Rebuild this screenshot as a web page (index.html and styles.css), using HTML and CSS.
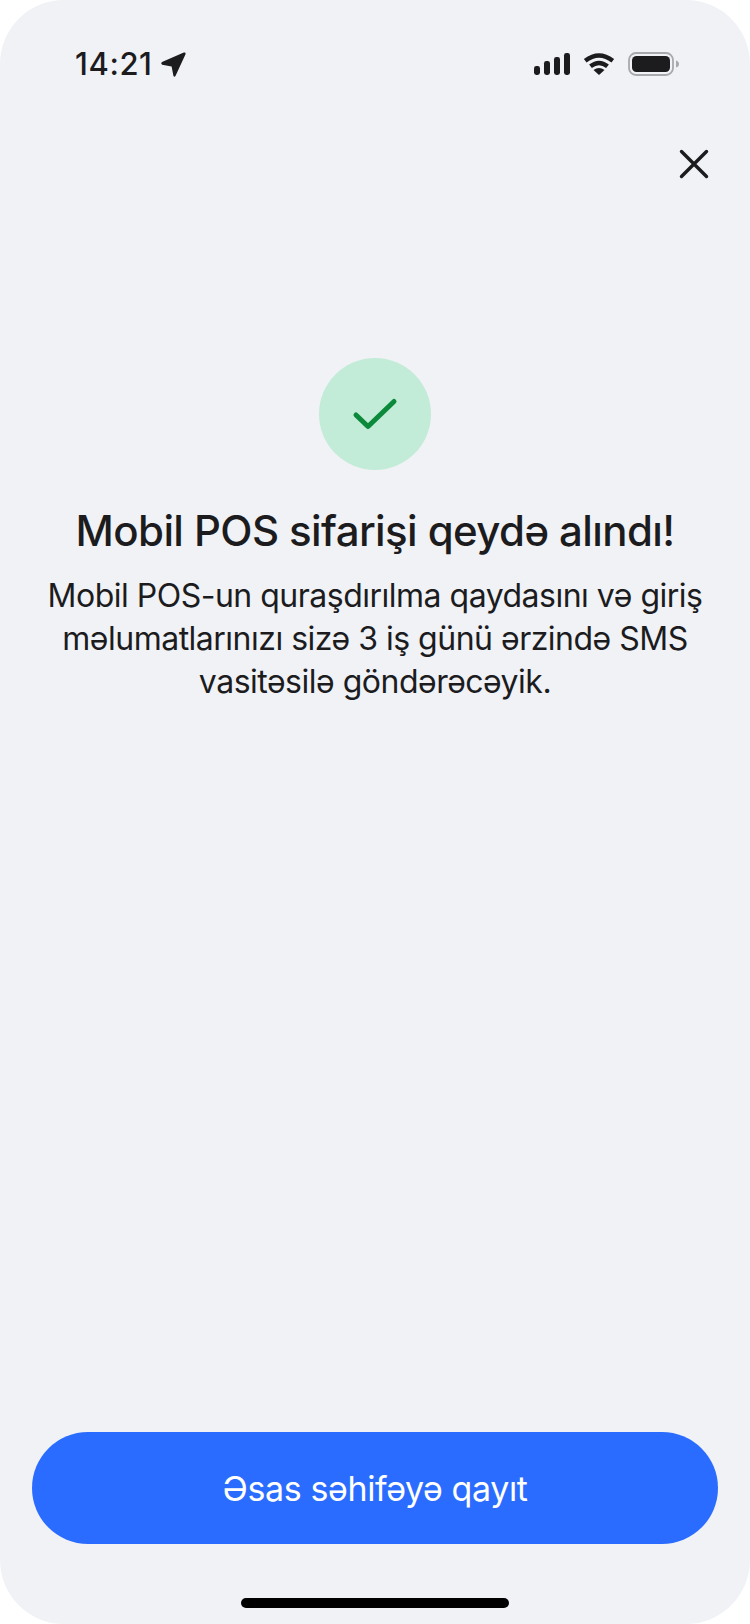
FILE: index.html
```html
<!DOCTYPE html>
<html lang="en">
<head>
<meta charset="UTF-8">
<meta name="viewport" content="width=device-width, initial-scale=1.0">
<title>Mobil POS</title>
<link rel="stylesheet" href="styles.css">
</head>
<body>

<div class="screen">
  <div class="status-bar">
    <div class="status-left">
      <span class="time">14:21</span>
      <svg class="location" width="25" height="25" viewBox="0 0 25 25"><path d="M1 10 L22.800 0.600 Q25.200 0 24.400 2.400 L14.600 23.800 Q13.400 25.600 12.400 23.800 L10.600 14.400 L1.200 12.800 Q-0.600 11.400 1 10 Z" fill="#1c1c1e"/></svg>
    </div>
    <div class="status-right">
      <svg width="36" height="22" viewBox="0 0 36 22"><rect x="0" y="13" width="6" height="9" rx="2.400" fill="#1c1c1e"/><rect x="10" y="8" width="6" height="14" rx="2.400" fill="#1c1c1e"/><rect x="20" y="4" width="6" height="18" rx="2.400" fill="#1c1c1e"/><rect x="30" y="0" width="6" height="22" rx="2.400" fill="#1c1c1e"/></svg>
      <svg width="32" height="22" viewBox="0 0 32 22"><path d="M2.200 7.800 Q16 -2.600 29.800 7.800" fill="none" stroke="#1c1c1e" stroke-width="4.400"/><path d="M7.500 13.200 Q16 6.600 24.500 13.200" fill="none" stroke="#1c1c1e" stroke-width="4.400"/><path d="M10.500 17 Q16 13.200 21.500 17 L16 22 Z" fill="#1c1c1e"/></svg>
      <svg width="51" height="24" viewBox="0 0 51 24"><rect x="1" y="1" width="44" height="22" rx="7" fill="none" stroke="#a9a9ad" stroke-width="1.800"/><rect x="4" y="4" width="38" height="16" rx="4.500" fill="#1c1c1e"/><path d="M48 8.500 Q51 9.500 51 12 Q51 14.500 48 15.500 Z" fill="#a9a9ad"/></svg>
    </div>
  </div>

  <div class="close-row">
    <svg width="30" height="30" viewBox="0 0 30 30"><path d="M2.500 2.500 L27.500 27.500 M27.500 2.500 L2.500 27.500" stroke="#1c1c1e" stroke-width="3.400" stroke-linecap="round"/></svg>
  </div>

  <div class="content">
    <div class="check-circle">
      <svg width="46" height="34" viewBox="0 0 46 34"><path d="M4 18 L16 29.500 L42 4.500" fill="none" stroke="#0a8a3a" stroke-width="5" stroke-linecap="round" stroke-linejoin="round"/></svg>
    </div>
    <h1 class="title">Mobil POS sifarişi qeydə alındı!</h1>
    <p class="desc">Mobil POS-un quraşdırılma qaydasını və giriş<br>məlumatlarınızı sizə 3 iş günü ərzində SMS<br>vasitəsilə göndərəcəyik.</p>
  </div>

  <div class="footer">
    <button class="main-btn">Əsas səhifəyə qayıt</button>
    <div class="home-bar"></div>
  </div>
</div>

</body>
</html>
```

FILE: styles.css
```css
* {
  box-sizing: border-box;
}
body {
  margin: 0;
  background-color: #fff;
  font-family: 'Inter', sans-serif;
  color: #1c1c1e;
}
.screen {
  width: 750px;
  height: 1624px;
  background-color: #f0f2f6;
  border-radius: 64px;
  display: flex;
  flex-direction: column;
  overflow: hidden;
}
.status-bar {
  display: flex;
  justify-content: space-between;
  align-items: center;
  height: 36px;
  margin-top: 46px;
  padding: 0 71px 0 75px;
}
.status-left {
  display: flex;
  align-items: center;
  gap: 8px;
}
.time {
  font-size: 31px;
  font-weight: 500;
  line-height: 36px;
  letter-spacing: 0.6px;
}
.status-right {
  display: flex;
  align-items: center;
  gap: 13px;
}
.close-row {
  display: flex;
  justify-content: flex-end;
  margin-top: 67px;
  padding-right: 41px;
}
.content {
  flex: 1;
  display: flex;
  flex-direction: column;
  align-items: center;
  padding-top: 179px;
  text-align: center;
}
.check-circle {
  width: 112px;
  height: 112px;
  border-radius: 50%;
  background-color: #c3ecd8;
  display: flex;
  align-items: center;
  justify-content: center;
}
.title {
  margin: 33px 0 0;
  font-size: 42px;
  font-weight: 450;
  line-height: 56px;
  letter-spacing: -0.6px;
}
.desc {
  margin: 15px 0 0;
  font-size: 32px;
  font-weight: 400;
  line-height: 43px;
  letter-spacing: -0.5px;
}
.footer {
  display: flex;
  flex-direction: column;
  align-items: center;
  padding: 0 32px 16px;
}
.main-btn {
  width: 100%;
  height: 112px;
  border: none;
  border-radius: 56px;
  background-color: #2a6cff;
  color: #fff;
  font-family: inherit;
  font-size: 34px;
  font-weight: 400;
  letter-spacing: -0.4px;
}
.home-bar {
  width: 268px;
  height: 10px;
  margin-top: 54px;
  border-radius: 5px;
  background-color: #000;
}
```
